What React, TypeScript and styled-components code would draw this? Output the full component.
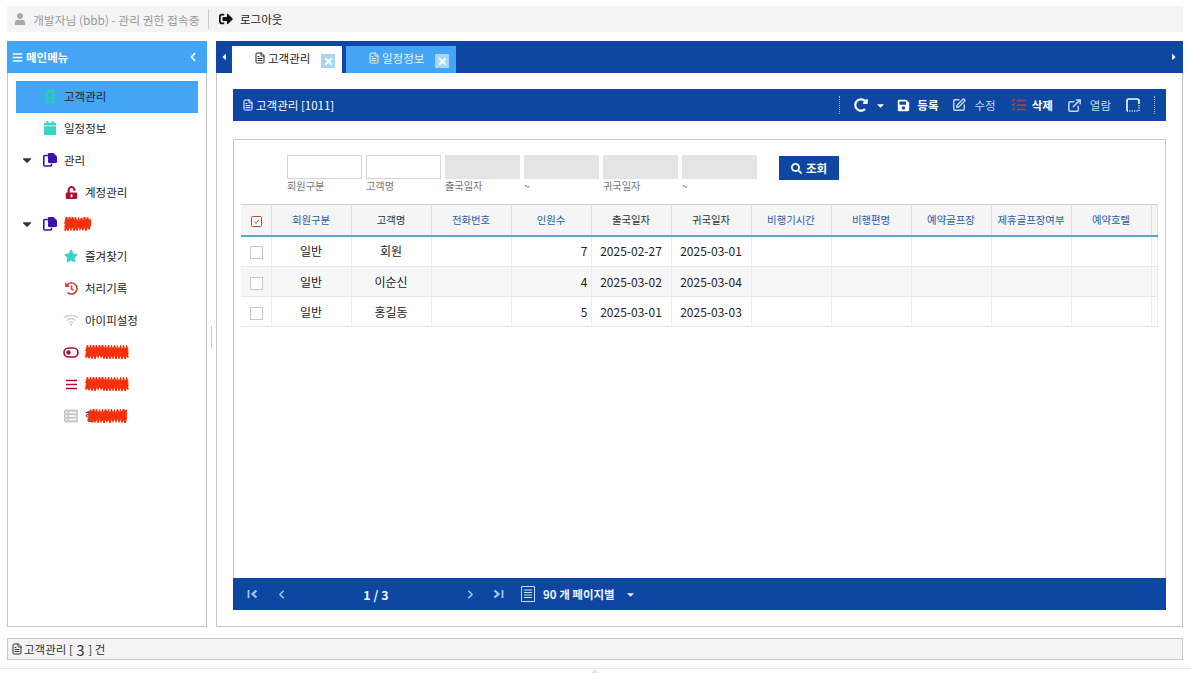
import React from "react";
import styled, { createGlobalStyle } from "styled-components";
import { FaBars, FaCalendar, FaChevronLeft, FaStar, FaHistory, FaSave, FaRedoAlt, FaSearch, FaUser, FaUnlockAlt, FaSignOutAlt, FaCaretDown, FaCaretLeft, FaCaretRight, FaTimes } from "react-icons/fa";
import { FileText, SquarePen, ExternalLink, ChevronLeft, ChevronRight } from "lucide-react";

const navy = "#0d47a1";
const sky = "#42a5f5";
const FONT = `"Noto Sans CJK KR", "Noto Sans", "Liberation Sans", sans-serif`;

const Global = createGlobalStyle`
  html, body { margin: 0; padding: 0; height: 673px; overflow: hidden; background: #fff; }
  body { font-family: ${FONT}; font-size: 12px; color: #222; }
  * { box-sizing: border-box; }
`;

const Page = styled.div`
  height: 673px; padding: 6px 8px 0 7px; display: flex; flex-direction: column; position: relative;
`;
const TopBar = styled.div`
  height: 26px; background: #f4f4f4; display: flex; align-items: center; padding-left: 7px; flex: none;
`;
const UserInfo = styled.span`
  display: flex; align-items: center; gap: 7px; color: #9a9a9a; font-size: 11.8px; width: 194px; white-space: nowrap;
`;
const Divider = styled.span`width: 1px; height: 20px; background: #ccc; margin-right: 10px;`;
const Logout = styled.span`display: flex; align-items: center; gap: 7px; color: #222; font-size: 11.5px;`;

const Body = styled.div`display: flex; margin-top: 9px; height: 586px; flex: none;`;
const Side = styled.aside`
  width: 200px; border: 1px solid #c4c4c4; border-top: 0; display: flex; flex-direction: column; flex: none;
`;
const SideHead = styled.div`
  margin: 0 -1px; height: 32px; background: ${sky}; color: #fff; display: flex; align-items: center;
  gap: 3px; padding: 0 9px 0 5px; font-size: 11.5px; font-weight: 700; flex: none;
`;
const Grow = styled.span`flex: 1;`;
const Menu = styled.div`padding: 8px 8px 0 8px; display: flex; flex-direction: column;`;
const MenuRow = styled.div<{ $level?: number; $active?: boolean }>`
  height: 32px; flex: none; display: flex; align-items: center; font-size: 11.5px; color: #222;
  padding-bottom: 2px;
  padding-left: ${(p) => (p.$level === 1 ? 47 : 4)}px;
  background: ${(p) => (p.$active ? sky : "transparent")};
`;
const Caret = styled.span`width: 14px; flex: none; display: flex; color: #333; margin-right: 8px;`;
const IconSlot = styled.span<{ $indent?: boolean }>`
  width: 16px; height: 16px; flex: none; display: flex; align-items: center; justify-content: center;
  margin-left: ${(p) => (p.$indent ? 22 : 0)}px; margin-right: 6px;
`;
const Splitter = styled.div`
  width: 9px; flex: none; display: flex; align-items: center; justify-content: center;
`;
const Grip = styled.span`display: block; width: 1px; height: 23px; background: #c8c8c8; margin-top: 6px;`;

const Main = styled.main`
  flex: 1; border: 1px solid #c4c4c4; border-top: 0; display: flex; flex-direction: column; min-width: 0;
`;
const TabBar = styled.div`
  margin: 0 -1px; height: 32px; background: ${navy}; display: flex; align-items: flex-end; flex: none; position: relative; padding-left: 16px; gap: 4px;
`;
const TabArrow = styled.span<{ $right?: boolean }>`
  position: absolute; top: 11px; color: #fff; display: flex;
  ${(p) => (p.$right ? "right: 4px;" : "left: 3px;")}
`;
const Tab = styled.div<{ $active?: boolean }>`
  width: 110px; height: 27px; background: ${(p) => (p.$active ? "#fff" : sky)};
  color: ${(p) => (p.$active ? "#222" : "#eaf4ff")}; display: flex; align-items: center; padding: 0 7px 0 22px; gap: 2px; font-size: 11.5px;
`;
const TabLabel = styled.span`flex: 1; margin-top: -3px; display: flex; align-items: center; gap: 2px;`;
const CloseBox = styled.span`
  width: 14px; height: 14px; background: #a5d6f7; color: #fff; display: flex; align-items: center; justify-content: center; margin-top: 3px;
`;
const Content = styled.div`flex: 1; padding: 16px; display: flex; flex-direction: column; min-height: 0;`;
const TitleBar = styled.div`
  height: 32px; background: ${navy}; color: #fff; display: flex; align-items: center; padding-left: 9px; flex: none; font-size: 11.5px;
`;
const TitleText = styled.span`display: flex; align-items: center; gap: 2px; flex: 1;`;
const Toolbar = styled.div`display: flex; align-items: center; padding-right: 11px; color: #fff;`;
const Sep = styled.span<{ $ml?: number }>`display: block; width: 0; height: 18px; border-left: 1px dotted #9fb6d8; margin-left: ${(p) => p.$ml ?? 0}px;`;
const ToolBtn = styled.span<{ $ml?: number; $gap?: number; $strong?: boolean }>`
  display: flex; align-items: center; gap: ${(p) => p.$gap ?? 6}px; margin-left: ${(p) => p.$ml ?? 0}px; font-size: 11.5px;
  color: ${(p) => (p.$strong ? "#fff" : "#c5daf2")};
  font-weight: ${(p) => (p.$strong ? 700 : 400)};
`;
const Panel = styled.section`
  margin-top: 18px; flex: 1; border: 1px solid #c9c9c9; border-bottom: 0; display: flex; flex-direction: column; min-height: 0;
`;
const Search = styled.div`height: 64px; padding: 15px 0 0 53px; display: flex; flex: none; gap: 4px;`;
const Field = styled.div`width: 75px; display: flex; flex-direction: column;`;
const Input = styled.div<{ $off?: boolean }>`
  height: 24px; border: 1px solid ${(p) => (p.$off ? "#e4e4e4" : "#d6d6d6")}; background: ${(p) => (p.$off ? "#e4e4e4" : "#fff")};
`;
const FieldLabel = styled.label`font-size: 10.2px; color: #777; line-height: 14px;`;
const SearchBtn = styled.button`
  width: 60px; height: 24px; margin: 1px 0 0 18px; border: 0; background: ${navy}; color: #fff; font: 700 11.5px ${FONT};
  display: flex; align-items: center; justify-content: center; gap: 4px; padding: 0;
`;
const TableWrap = styled.div`flex: 1; padding: 0 7px; min-height: 0;`;
const Grid = styled.table`
  width: 917px; table-layout: fixed; border-collapse: collapse; border-top: 1px solid #cfcfcf;
`;
const Th = styled.th<{ $link?: boolean }>`
  height: 31px; background: #f5f5f5; border-right: 1px solid #dfdfdf; border-bottom: 2px solid #5aa5cf; padding: 0;
  font-size: 10.4px; font-weight: 400; color: ${(p) => (p.$link ? "#2a5caa" : "#333")}; text-align: center; white-space: nowrap;
`;
const Tr = styled.tr<{ $alt?: boolean }>`
  background: ${(p) => (p.$alt ? "#f7f7f7" : "#fff")};
  &:first-child td { height: 31px; }
`;
const Td = styled.td<{ $right?: boolean }>`
  height: 30px; padding: 0 ${(p) => (p.$right ? "3px" : 0)} 1px 0; border-right: 1px solid #ececec; border-bottom: 1px solid #e6e6e6;
  text-align: ${(p) => (p.$right ? "right" : "center")}; font-size: 12px; color: #222; white-space: nowrap;
`;
const Check = styled.span`display: inline-block; width: 13px; height: 13px; margin-left: 1px; border: 1px solid #c8c8c8; background: #fff; vertical-align: middle;`;
const HeadCheck = styled.svg`vertical-align: middle; margin-left: 1px;`;
const Pager = styled.div`
  margin: 0 -1px; height: 32px; background: ${navy}; display: flex; align-items: center; flex: none; font-weight: 700; font-size: 12.5px; color: #eef4fc;
`;
const PageBtn = styled.span<{ $w: number }>`width: ${(p) => p.$w}px; flex: none; display: flex; align-items: center; justify-content: center; color: #8fc4f2;`;
const PageNo = styled.span`width: 170px; text-align: center; flex: none;`;
const PageSize = styled.span`display: flex; align-items: center; gap: 8px; margin-left: 2px; font-size: 11.5px;`;
const LinesIcon = styled.svg`flex: none;`;
const SizeCaret = styled.span`display: flex; margin-left: 2px;`;
const Status = styled.footer`
  margin-top: 11px; height: 22px; background: #f4f4f4; border: 1px solid #c8c8c8; display: flex; align-items: center;
  padding-left: 3px; gap: 1px; font-size: 11.5px; color: #333; flex: none; white-space: pre;
`;
const Count = styled.span`font-size: 15px; line-height: 1; font-weight: 400;`;
const BottomRule = styled.div`margin: 8px -8px 0 -7px; height: 1px; background: #e2e2e2; position: relative;`;
const Nub = styled.span`
  position: absolute; left: 591px; top: 1px; width: 0; height: 0; border-left: 4px solid transparent; border-right: 4px solid transparent; border-bottom: 4px solid #e4e4e4;
`;
const Scrib = styled.svg<{ $ml?: number }>`flex: none; margin-left: ${(p) => p.$ml ?? 0}px;`;

function Scribble({ w, ml }: { w: number; ml?: number }) {
  // Hand-scrawled redaction: a tight zigzag with uneven amplitude.
  let d = "";
  let seed = w * 7 + 3;
  const next = () => {
    seed = (seed * 31 + 11) % 101;
    return seed / 101;
  };
  for (let row = 0; row < 3; row++) {
    const y = 4 + row * 3;
    d += `M${1 + next() * 2} ${y} `;
    for (let x = 1; x < w - 1; x += 1.5) {
      const up = Math.round(x / 1.5) % 2 === 0;
      d += `L${x.toFixed(1)} ${(y + (up ? -1 : 1) * (1.5 + next() * 2.5)).toFixed(1)} `;
    }
  }
  return (
    <Scrib $ml={ml} width={w} height={14} viewBox={`0 0 ${w} 14`}>
      <path d={d} fill="none" stroke="#f5300a" strokeWidth="1.8" />
    </Scrib>
  );
}

const Doc = ({ c = "currentColor" }: { c?: string }) => <FileText size={12} color={c} strokeWidth={2} />;
const Files = () => (
  <svg width="16" height="16" viewBox="0 0 16 16">
    <path d="M6 3.5H2.8a1 1 0 0 0-1 1V13a1 1 0 0 0 1 1H8.5a1 1 0 0 0 1-1v-1.5" fill="none" stroke="#3f0fb0" strokeWidth="1.6" />
    <path d="M7 1h4.5L15 4.5V10a1 1 0 0 1-1 1H7a1 1 0 0 1-1-1V2a1 1 0 0 1 1-1z" fill="#3f0fb0" />
  </svg>
);
const Contact = () => (
  <svg width="12" height="15" viewBox="0 0 12 15">
    <rect x="1" y="0.5" width="10" height="14" fill="#2bc8bc" />
    <circle cx="6" cy="6" r="2" fill="#42a5f5" />
    <path d="M2.8 11.5c.4-2 6-2 6.4 0z" fill="#42a5f5" />
  </svg>
);
const Wifi = () => (
  <svg width="18" height="14" viewBox="0 0 18 14">
    <path d="M1 4.5c4.500-4 11.500-4 16 0M4 7.500c3-2.500 7-2.500 10 0M6.800 10c1.300-1 3.100-1 4.400 0" fill="none" stroke="#c8c8c8" strokeWidth="1.400" />
    <circle cx="9" cy="12.300" r="1.200" fill="#c8c8c8" />
  </svg>
);
const ListTable = () => (
  <svg width="14" height="14" viewBox="0 0 14 14">
    <rect x="0" y="0.500" width="14" height="13" rx="1.500" fill="#c6c6c6" />
    <path d="M1.500 3.500h2M1.500 7h2M1.500 10.500h2M5 3.500h7.500M5 7h7.500M5 10.500h7.500" stroke="#fff" strokeWidth="1.300" />
  </svg>
);
const Toggle = () => (
  <svg width="16" height="11" viewBox="0 0 16 11">
    <rect x="1" y="1" width="14" height="9" rx="4.500" fill="none" stroke="#ab0f33" strokeWidth="1.600" />
    <circle cx="5.500" cy="5.500" r="2.200" fill="#ab0f33" />
  </svg>
);
const Lines = () => (
  <svg width="13" height="11" viewBox="0 0 13 11">
    <path d="M1 1.500h11M1 5.500h11M1 9.500h11" stroke="#ab0f33" strokeWidth="1.600" />
  </svg>
);
const RedTasks = () => (
  <svg width="16" height="14" viewBox="0 0 16 14">
    <path d="M6 2.500h9M6 7h9M6 11.500h9" stroke="#b8403a" strokeWidth="1.600" />
    <path d="M1 2l1 1 2-2M1 6.500l1 1 2-2M1 11l1 1 2-2" fill="none" stroke="#b8403a" strokeWidth="1.200" />
  </svg>
);
const Corner = () => (
  <svg width="14" height="14" viewBox="0 0 14 14">
    <path d="M13 6V3a2 2 0 0 0-2-2H3a2 2 0 0 0-2 2v10" fill="none" stroke="#fff" strokeWidth="1.600" />
    <path d="M1 13h12V7" fill="none" stroke="#fff" strokeWidth="1.400" strokeDasharray="1 1.400" />
  </svg>
);
const ChevLast = ({ flip }: { flip?: boolean }) => (
  <svg width="12" height="10" viewBox="0 0 12 10" transform={flip ? "scale(-1 1)" : undefined}>
    <path d="M1.500 1.500 5.500 5 1.500 8.500" fill="none" stroke="#9fcdf5" strokeWidth="2.200" />
    <path d="M9.500 1v8" stroke="#9fcdf5" strokeWidth="1.800" />
  </svg>
);

const columns: [string, boolean][] = [
  ["회원구분", true], ["고객명", false], ["전화번호", true], ["인원수", true], ["출국일자", false], ["귀국일자", false],
  ["비행기시간", true], ["비행편명", true], ["예약골프장", true], ["제휴골프장여부", true], ["예약호텔", true],
];
const rows = [
  ["일반", "회원", "7", "2025-02-27", "2025-03-01"],
  ["일반", "이순신", "4", "2025-03-02", "2025-03-04"],
  ["일반", "홍길동", "5", "2025-03-01", "2025-03-03"],
];
const fields: [string, boolean][] = [["회원구분", false], ["고객명", false], ["출국일자", true], ["~", true], ["귀국일자", true], ["~", true]];

export default function App() {
  return (
    <Page>
      <Global />
      <TopBar>
        <UserInfo><FaUser size={12} color="#a8a8a8" />개발자님 (bbb) - 관리 권한 접속중</UserInfo>
        <Divider />
        <Logout><FaSignOutAlt size={14} color="#111" />로그아웃</Logout>
      </TopBar>
      <Body>
        <Side>
          <SideHead><FaBars size={11} />메인메뉴<Grow /><FaChevronLeft size={10} /></SideHead>
          <Menu>
            <MenuRow $active><IconSlot $indent><Contact /></IconSlot>고객관리</MenuRow>
            <MenuRow><IconSlot $indent><FaCalendar size={14} color="#37d6c4" /></IconSlot>일정정보</MenuRow>
            <MenuRow><Caret><FaCaretDown size={14} /></Caret><IconSlot><Files /></IconSlot>관리</MenuRow>
            <MenuRow $level={1}><IconSlot><FaUnlockAlt size={13} color="#ab0f33" /></IconSlot>계정관리</MenuRow>
            <MenuRow><Caret><FaCaretDown size={14} /></Caret><IconSlot><Files /></IconSlot><Scribble w={29} /></MenuRow>
            <MenuRow $level={1}><IconSlot><FaStar size={14} color="#37d6c4" /></IconSlot>즐겨찾기</MenuRow>
            <MenuRow $level={1}><IconSlot><FaHistory size={13} color="#c9432f" /></IconSlot>처리기록</MenuRow>
            <MenuRow $level={1}><IconSlot><Wifi /></IconSlot>아이피설정</MenuRow>
            <MenuRow $level={1}><IconSlot><Toggle /></IconSlot><Scribble w={45} /></MenuRow>
            <MenuRow $level={1}><IconSlot><Lines /></IconSlot><Scribble w={45} /></MenuRow>
            <MenuRow $level={1}><IconSlot><ListTable /></IconSlot>행<Scribble w={41} ml={-8} /></MenuRow>
          </Menu>
        </Side>
        <Splitter><Grip /></Splitter>
        <Main>
          <TabBar>
            <TabArrow><FaCaretLeft size={10} /></TabArrow>
            <Tab $active><TabLabel><Doc />고객관리</TabLabel><CloseBox><FaTimes size={11} /></CloseBox></Tab>
            <Tab><TabLabel><Doc />일정정보</TabLabel><CloseBox><FaTimes size={11} /></CloseBox></Tab>
            <TabArrow $right><FaCaretRight size={10} /></TabArrow>
          </TabBar>
          <Content>
            <TitleBar>
              <TitleText><Doc />고객관리 [1011]</TitleText>
              <Toolbar>
                <Sep />
                <ToolBtn $ml={14} $strong><FaRedoAlt size={14} /></ToolBtn>
                <ToolBtn $ml={7}><FaCaretDown size={11} color="#fff" /></ToolBtn>
                <ToolBtn $ml={11} $gap={7} $strong><FaSave size={13} />등록</ToolBtn>
                <ToolBtn $ml={14} $gap={8}><SquarePen size={14} strokeWidth={2.4} />수정</ToolBtn>
                <ToolBtn $ml={15} $gap={5} $strong><RedTasks />삭제</ToolBtn>
                <ToolBtn $ml={14} $gap={8}><ExternalLink size={15} strokeWidth={2.4} />열람</ToolBtn>
                <ToolBtn $ml={15}><Corner /></ToolBtn>
                <Sep $ml={14} />
              </Toolbar>
            </TitleBar>
            <Panel>
              <Search>
                {fields.map(([label, off], i) => (
                  <Field key={i}><Input $off={off} /><FieldLabel>{label}</FieldLabel></Field>
                ))}
                <SearchBtn><FaSearch size={11} />조회</SearchBtn>
              </Search>
              <TableWrap>
                <Grid>
                  <colgroup>
                    <col style={{ width: 30 }} />
                    {columns.map((c) => <col key={c[0]} style={{ width: 80 }} />)}
                    <col />
                  </colgroup>
                  <thead>
                    <tr>
                      <Th>
                        <HeadCheck width="11" height="11" viewBox="0 0 11 11">
                          <rect x=".5" y=".5" width="10" height="10" rx="1" fill="#fff" stroke="#c0452f" />
                          <path d="M3 5.500l2 2 3-4" fill="none" stroke="#c0452f" />
                        </HeadCheck>
                      </Th>
                      {columns.map(([t, link]) => <Th key={t} $link={link}>{t}</Th>)}
                      <Th />
                    </tr>
                  </thead>
                  <tbody>
                    {rows.map((r, i) => (
                      <Tr key={i} $alt={i === 1}>
                        <Td><Check /></Td>
                        <Td>{r[0]}</Td>
                        <Td>{r[1]}</Td>
                        <Td />
                        <Td $right>{r[2]}</Td>
                        <Td>{r[3]}</Td>
                        <Td>{r[4]}</Td>
                        <Td /><Td /><Td /><Td /><Td /><Td />
                      </Tr>
                    ))}
                  </tbody>
                </Grid>
              </TableWrap>
              <Pager>
                <PageBtn $w={38}><ChevLast flip /></PageBtn>
                <PageBtn $w={20}><ChevronLeft size={13} strokeWidth={3.2} /></PageBtn>
                <PageNo>1 / 3</PageNo>
                <PageBtn $w={18}><ChevronRight size={13} strokeWidth={3.2} /></PageBtn>
                <PageBtn $w={40}><ChevLast /></PageBtn>
                <PageSize>
                  <LinesIcon width="14" height="16" viewBox="0 0 14 16">
                    <path d="M.5.5h13v15H.5zM3 4h8M3 6.500h8M3 9h8M3 11.500h8" fill="none" stroke="#cfe3f7" />
                  </LinesIcon>
                  90 개 페이지별
                  <SizeCaret><FaCaretDown size={11} /></SizeCaret>
                </PageSize>
              </Pager>
            </Panel>
          </Content>
        </Main>
      </Body>
      <Status><Doc />고객관리 [ <Count>3</Count> ] 건</Status>
      <BottomRule><Nub /></BottomRule>
    </Page>
  );
}
